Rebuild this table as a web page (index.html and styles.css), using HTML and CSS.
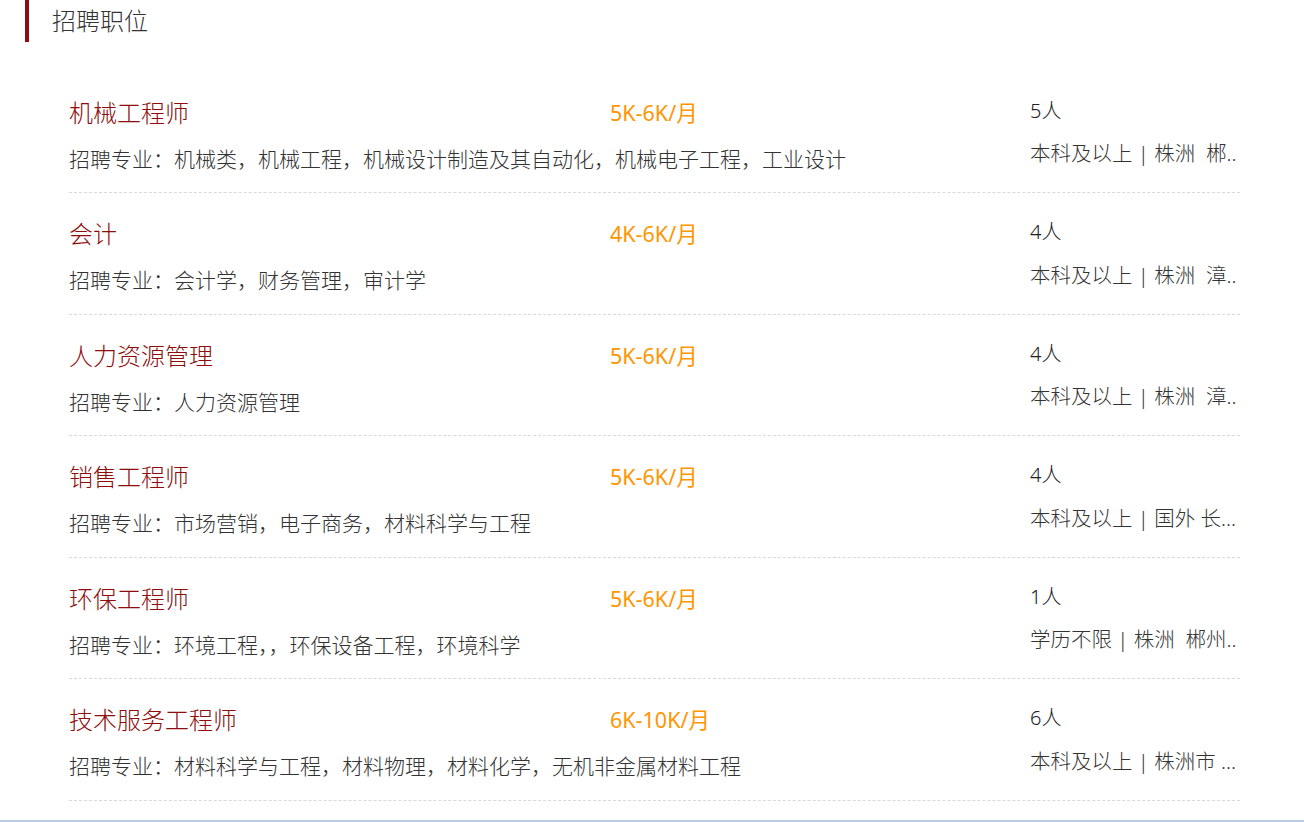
FILE: index.html
```html
<!DOCTYPE html>
<html lang="zh-CN">
<head>
<meta charset="utf-8">
<title>招聘职位</title>
<link rel="stylesheet" href="styles.css">
</head>
<body>
<div class="page">
  <div class="section-head"><h2 class="section-title">招聘职位</h2></div>
  <ul class="job-list">
    <li class="job">
      <div class="job-main">
        <div class="job-top"><a class="job-name">机械工程师</a><span class="job-salary">5K-6K/月</span></div>
        <div class="job-major">招聘专业：机械类，机械工程，机械设计制造及其自动化，机械电子工程，工业设计</div>
      </div>
      <div class="job-side">
        <div class="job-count">5人</div>
        <div class="job-addr">本科及以上 | 株洲  郴..</div>
      </div>
    </li>
    <li class="job">
      <div class="job-main">
        <div class="job-top"><a class="job-name">会计</a><span class="job-salary">4K-6K/月</span></div>
        <div class="job-major">招聘专业：会计学，财务管理，审计学</div>
      </div>
      <div class="job-side">
        <div class="job-count">4人</div>
        <div class="job-addr">本科及以上 | 株洲  漳..</div>
      </div>
    </li>
    <li class="job">
      <div class="job-main">
        <div class="job-top"><a class="job-name">人力资源管理</a><span class="job-salary">5K-6K/月</span></div>
        <div class="job-major">招聘专业：人力资源管理</div>
      </div>
      <div class="job-side">
        <div class="job-count">4人</div>
        <div class="job-addr">本科及以上 | 株洲  漳..</div>
      </div>
    </li>
    <li class="job">
      <div class="job-main">
        <div class="job-top"><a class="job-name">销售工程师</a><span class="job-salary">5K-6K/月</span></div>
        <div class="job-major">招聘专业：市场营销，电子商务，材料科学与工程</div>
      </div>
      <div class="job-side">
        <div class="job-count">4人</div>
        <div class="job-addr">本科及以上 | 国外 长...</div>
      </div>
    </li>
    <li class="job">
      <div class="job-main">
        <div class="job-top"><a class="job-name">环保工程师</a><span class="job-salary">5K-6K/月</span></div>
        <div class="job-major">招聘专业：环境工程，，环保设备工程，环境科学</div>
      </div>
      <div class="job-side">
        <div class="job-count">1人</div>
        <div class="job-addr">学历不限 | 株洲  郴州..</div>
      </div>
    </li>
    <li class="job">
      <div class="job-main">
        <div class="job-top"><a class="job-name">技术服务工程师</a><span class="job-salary">6K-10K/月</span></div>
        <div class="job-major">招聘专业：材料科学与工程，材料物理，材料化学，无机非金属材料工程</div>
      </div>
      <div class="job-side">
        <div class="job-count">6人</div>
        <div class="job-addr">本科及以上 | 株洲市 ...</div>
      </div>
    </li>
  </ul>
  <div class="next-section"></div>
</div>
</body>
</html>
```

FILE: styles.css
```css
* { box-sizing: border-box; }
html, body { margin: 0; padding: 0; background: #fff; }
body {
  font-family: "Noto Sans", "Noto Sans CJK SC", sans-serif;
  font-weight: 300;
  color: #333;
  overflow: hidden;
}
.page { width: 1304px; height: 822px; display: flex; flex-direction: column; }
.section-head {
  margin-left: 25px;
  height: 42px;
  border-left: 4px solid #8e0c0c;
  padding-left: 23px;
  display: flex;
  align-items: center;
}
.section-title {
  margin: 0;
  font-size: 24px;
  font-weight: 300;
  color: #333;
  line-height: 32px;
}
.job-list {
  list-style: none;
  margin: 29.5px 0 0 69px;
  padding: 0;
  width: 1171px;
}
.job {
  display: flex;
  height: 121.5px;
  padding-top: 24px;
  border-bottom: 1px dashed #d9d9d9;
}
.job-main { width: 961px; flex: none; }
.job-top { display: grid; grid-template-columns: 541px auto; line-height: 34px; }
.job-name { font-size: 24px; color: #8e0c0c; text-decoration: none; }
.job-salary { font-size: 21.5px; color: #ff9500; font-weight: 400; }
.job-major { margin-top: 12px; font-size: 21px; line-height: 34px; color: #333; white-space: nowrap; }
.job-side { width: 210px; flex: none; }
.job-count { font-size: 20px; line-height: 30px; color: #222; }
.job-addr {
  margin-top: 12.5px;
  font-size: 20.5px;
  line-height: 30px;
  color: #333;
  white-space: pre;
}
.next-section { margin-top: auto; border-top: 2px solid #b7cce1; height: 2px; }
```
